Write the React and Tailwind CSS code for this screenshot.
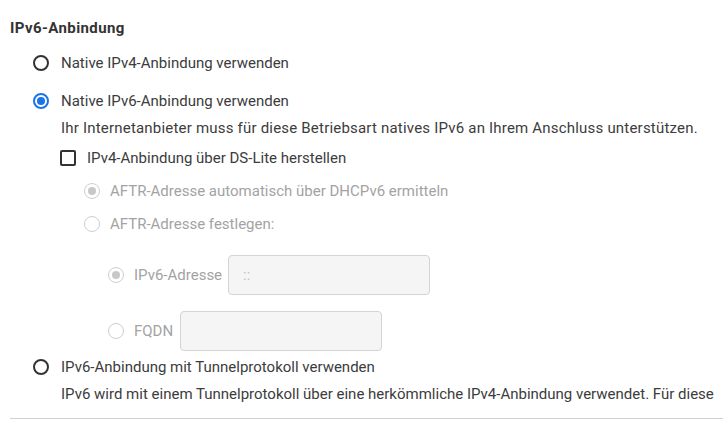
import React from "react";

function Radio({ checked, disabled }) {
  if (disabled) {
    return (
      <span className="relative flex h-[16px] w-[16px] shrink-0 items-center justify-center rounded-full border-[1.5px] border-[#cfcfcf] bg-white">
        {checked && <span className="h-[8px] w-[8px] rounded-full bg-[#c8c8c8]" />}
      </span>
    );
  }
  if (checked) {
    return (
      <span className="flex h-[16px] w-[16px] shrink-0 items-center justify-center rounded-full border-2 border-[#1a73e8] bg-white">
        <span className="h-[8px] w-[8px] rounded-full bg-[#1a73e8]" />
      </span>
    );
  }
  return <span className="h-[16px] w-[16px] shrink-0 rounded-full border-2 border-[#333333] bg-white" />;
}

export default function App() {
  return (
    <div className="h-[423px] w-[723px] overflow-hidden bg-white text-[15px] text-[#3c3c3c]" style={{ fontFamily: "Roboto, 'Noto Sans', sans-serif" }}>
      <div className="pl-[10px]">
        <div className="mt-[18px] h-[20px] text-[15px] leading-[20px] font-bold tracking-[0.4px] text-[#333]">IPv6-Anbindung</div>

        <div className="ml-[23px] mt-[15px] flex h-[20px] items-center gap-[12px] leading-[20px]">
          <Radio />
          <span>Native IPv4-Anbindung verwenden</span>
        </div>

        <div className="ml-[23px] mt-[18px] flex h-[20px] items-center gap-[12px] leading-[20px]">
          <Radio checked />
          <span>Native IPv6-Anbindung verwenden</span>
        </div>
        <div className="ml-[51px] mt-[7px] h-[20px] whitespace-nowrap leading-[20px] tracking-[0.2px]">
          Ihr Internetanbieter muss für diese Betriebsart natives IPv6 an Ihrem Anschluss unterstützen.
        </div>

        <div className="ml-[50px] mt-[10px] flex h-[20px] items-center gap-[11px] leading-[20px]">
          <span className="h-[16px] w-[16px] shrink-0 rounded-[2px] border-2 border-[#333]" />
          <span>IPv4-Anbindung über DS-Lite herstellen</span>
        </div>

        <div className="ml-[74px] mt-[13px] flex h-[20px] items-center gap-[10px] leading-[20px] text-[#a3a3a3]">
          <Radio checked disabled />
          <span>AFTR-Adresse automatisch über DHCPv6 ermitteln</span>
        </div>
        <div className="ml-[74px] mt-[13px] flex h-[20px] items-center gap-[10px] leading-[20px] text-[#a3a3a3]">
          <Radio disabled />
          <span>AFTR-Adresse festlegen:</span>
        </div>

        <div className="ml-[98px] mt-[21px] flex h-[40px] items-center leading-[20px] text-[#a3a3a3]">
          <Radio checked disabled />
          <span className="ml-[10px] w-[86px] whitespace-nowrap">IPv6-Adresse</span>
          <div className="ml-[8px] flex h-[40px] w-[202px] items-center rounded-[4px] border border-[#d4d4d4] bg-[#f5f5f5] pl-[14px] text-[#c4c4c4]">::</div>
        </div>

        <div className="ml-[98px] mt-[16px] flex h-[40px] items-center leading-[20px] text-[#a3a3a3]">
          <Radio disabled />
          <span className="ml-[10px] w-[38px] whitespace-nowrap">FQDN</span>
          <div className="ml-[8px] h-[40px] w-[202px] rounded-[4px] border border-[#d4d4d4] bg-[#f5f5f5]" />
        </div>

        <div className="ml-[23px] mt-[6px] flex h-[20px] items-center gap-[12px] leading-[20px]">
          <Radio />
          <span>IPv6-Anbindung mit Tunnelprotokoll verwenden</span>
        </div>
        <div className="ml-[51px] mt-[7px] h-[20px] whitespace-nowrap leading-[20px]">
          IPv6 wird mit einem Tunnelprotokoll über eine herkömmliche IPv4-Anbindung verwendet. Für diese
        </div>

        <div className="mt-[14px] h-px bg-[#d0d0d0]" />
      </div>
    </div>
  );
}
